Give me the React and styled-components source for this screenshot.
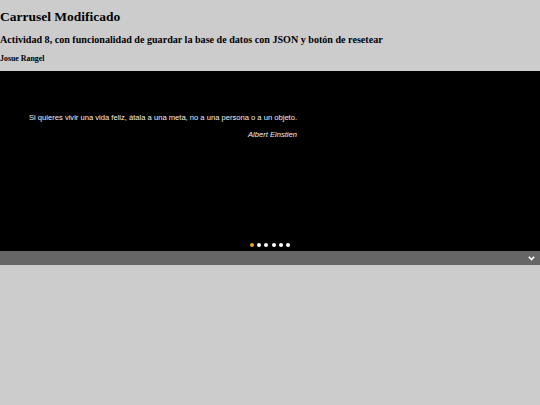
import React from "react";
import styled, { createGlobalStyle } from "styled-components";

const Global = createGlobalStyle`
  html, body { margin: 0; padding: 0; background: #cccccc; }
  body { font-family: "Liberation Serif", "Times New Roman", serif; color: #000; }
`;

const Page = styled.div`
  display: flex;
  flex-direction: column;
`;

const Header = styled.header`
  display: flow-root;
`;

const Title = styled.h1`
  font-size: 13.5px;
  font-weight: bold;
  margin: 9px 0;
  line-height: 15.5px;
`;

const Subtitle = styled.h2`
  font-size: 10.1px;
  font-weight: bold;
  margin: 8.5px 0;
  line-height: 11.5px;
`;

const Author = styled.h3`
  font-size: 7.9px;
  font-weight: bold;
  margin: 8px 0 8.5px;
  line-height: 9px;
`;

const Carousel = styled.section`
  background: #000;
  height: 180px;
  display: flex;
  flex-direction: column;
  justify-content: space-between;
`;

const Slide = styled.div`
  padding: 42px 0 0 29px;
  width: 268px;
  font-family: "Liberation Sans", Arial, sans-serif;
  color: #f0f0f0;
`;

const Quote = styled.p`
  margin: 0;
  font-size: 7.6px;
  line-height: 9px;
  white-space: nowrap;
`;

const Cite = styled.p`
  margin: 8px 0 0;
  font-size: 7.6px;
  line-height: 9px;
  font-style: italic;
  text-align: right;
`;

const Dots = styled.div`
  display: flex;
  justify-content: center;
  gap: 3.3px;
  padding-bottom: 4px;
`;

const Dot = styled.span`
  width: 4px;
  height: 4px;
  border-radius: 50%;
  background: ${(p) => (p.$active ? "#f0a030" : "#ffffff")};
`;

const Bar = styled.div`
  height: 14px;
  background: #666666;
  display: flex;
  align-items: center;
  justify-content: flex-end;
  padding-right: 5px;
`;

const Chevron = styled.svg`
  width: 7px;
  height: 5px;
  display: block;
`;

export default function App() {
  return (
    <Page>
      <Global />
      <Header>
        <Title>Carrusel Modificado</Title>
        <Subtitle>
          Actividad 8, con funcionalidad de guardar la base de datos con JSON y botón de resetear
        </Subtitle>
        <Author>Josue Rangel</Author>
      </Header>
      <Carousel>
        <Slide>
          <Quote>
            Si quieres vivir una vida feliz, átala a una meta, no a una persona o a un objeto.
          </Quote>
          <Cite>Albert Einstien</Cite>
        </Slide>
        <Dots>
          {[0, 1, 2, 3, 4, 5].map((i) => (
            <Dot key={i} $active={i === 0} />
          ))}
        </Dots>
      </Carousel>
      <Bar>
        <Chevron viewBox="0 0 7 5">
          <path d="M0.8 0.8 L3.5 3.6 L6.2 0.8" stroke="#fff" strokeWidth="1.6" fill="none" />
        </Chevron>
      </Bar>
    </Page>
  );
}
